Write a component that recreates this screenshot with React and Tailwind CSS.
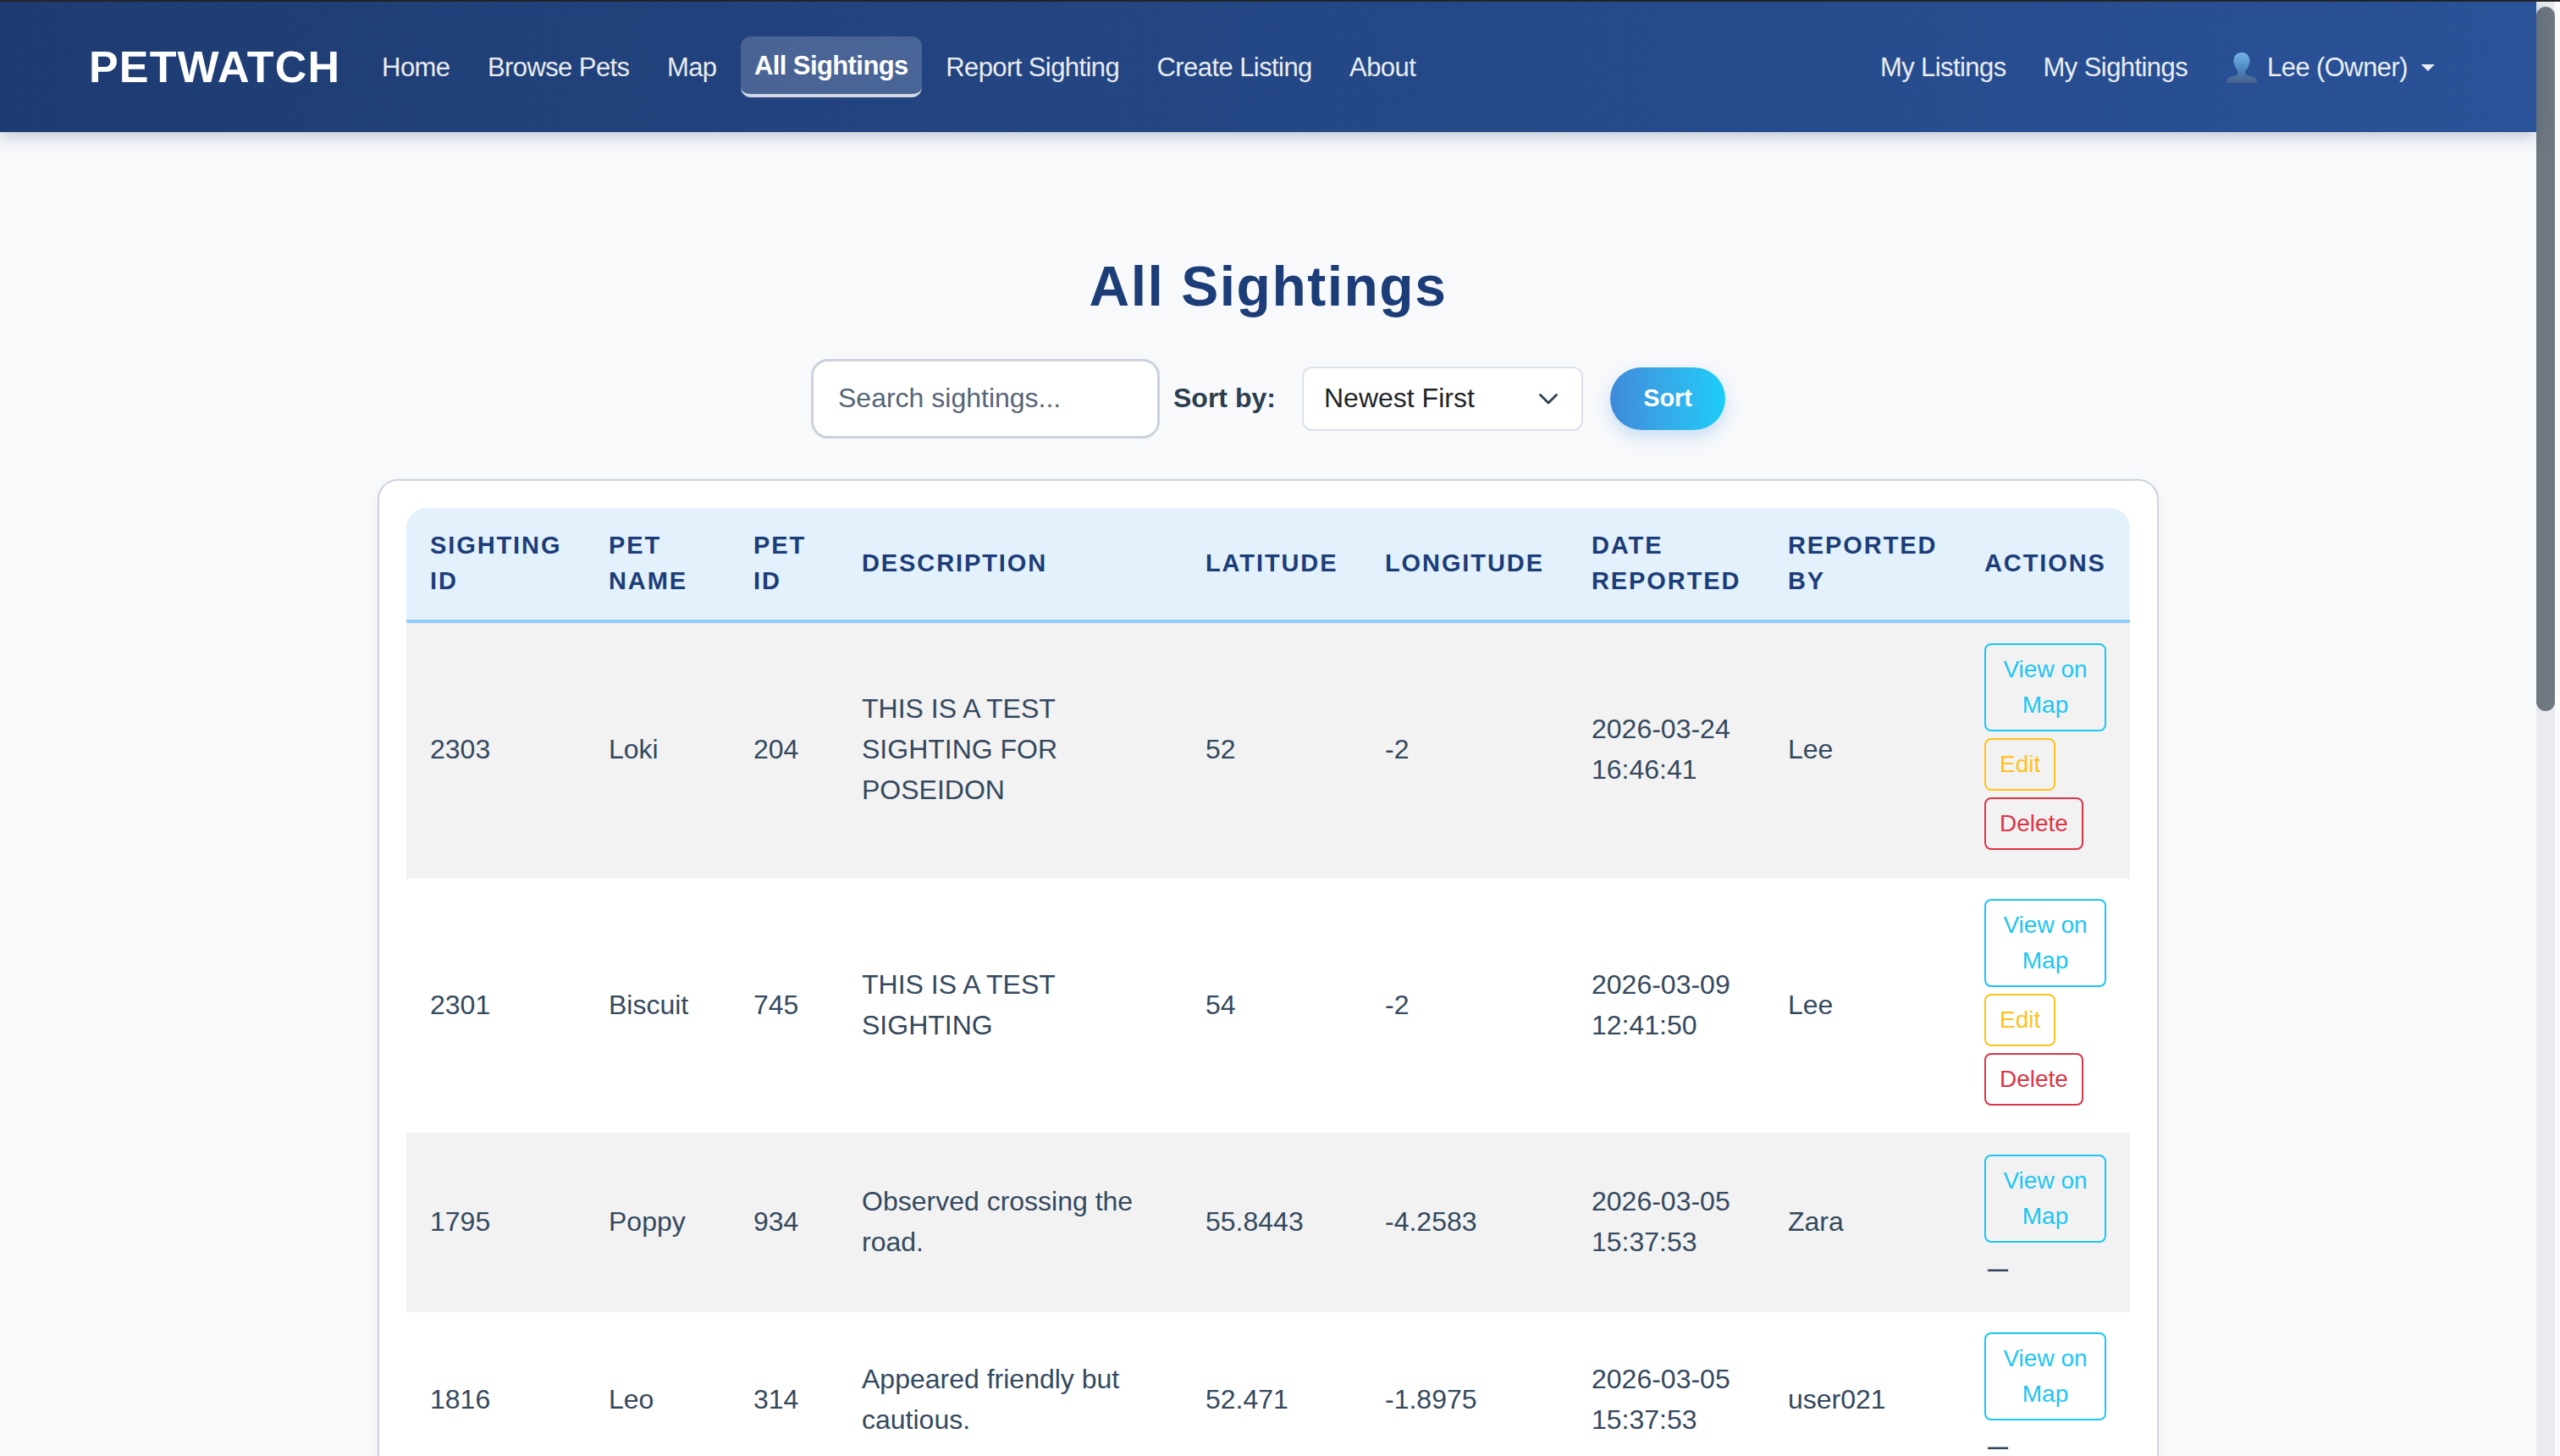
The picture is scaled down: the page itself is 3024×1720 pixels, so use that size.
import React from 'react';
import clsx from 'clsx';

const NAV_LINKS = ['Home', 'Browse Pets', 'Map', 'All Sightings', 'Report Sighting', 'Create Listing', 'About'];

const COLUMNS = [
    { label: 'Sighting ID', width: 'w-[211px]' },
    { label: 'Pet Name', width: 'w-[171px]' },
    { label: 'Pet ID', width: 'w-[128px]' },
    { label: 'Description', width: 'w-[406px]' },
    { label: 'Latitude', width: 'w-[212px]' },
    { label: 'Longitude', width: 'w-[244px]' },
    { label: 'Date Reported', width: 'w-[232px]' },
    { label: 'Reported By', width: 'w-[232px]' },
    { label: 'Actions', width: 'w-[200px]' },
];

const SIGHTINGS = [
    { id: 2303, name: 'Loki', petId: 204, description: 'THIS IS A TEST SIGHTING FOR POSEIDON', lat: '52', lng: '-2', date: '2026-03-24 16:46:41', by: 'Lee', own: true },
    { id: 2301, name: 'Biscuit', petId: 745, description: 'THIS IS A TEST SIGHTING', lat: '54', lng: '-2', date: '2026-03-09 12:41:50', by: 'Lee', own: true },
    { id: 1795, name: 'Poppy', petId: 934, description: 'Observed crossing the road.', lat: '55.8443', lng: '-4.2583', date: '2026-03-05 15:37:53', by: 'Zara', own: false },
    { id: 1816, name: 'Leo', petId: 314, description: 'Appeared friendly but cautious.', lat: '52.471', lng: '-1.8975', date: '2026-03-05 15:37:53', by: 'user021', own: false },
];

const UserIcon = () => (
    <svg viewBox="0 0 36 38" className="ml-0.5 h-[38px] w-9">
        <defs>
            <linearGradient id="bust" x1="0" y1="0" x2="0" y2="1">
                <stop offset="0" stopColor="#74b2e6" />
                <stop offset="0.5" stopColor="#4f8cc4" />
                <stop offset="1" stopColor="#485f88" />
            </linearGradient>
        </defs>
        <path
            d="M18 1c5.800 0 9.200 3.600 9.200 8.800 1 .3 1 3.200-.4 4-.5 4-2 6.700-4.300 8.700v3.500c0 1.600 2.500 2.200 6 2.900 5 1 7.500 3.100 7.500 8.100H0c0-5 2.500-7.100 7.500-8.100 3.500-.7 6-1.300 6-2.900v-3.500c-2.300-2-3.800-4.700-4.300-8.700-1.400-.8-1.400-3.700-.4-4C8.800 4.600 12.200 1 18 1z"
            fill="url(#bust)"
        />
    </svg>
);

const NavLink = ({ children, active }) => (
    <a
        className={clsx(
            'flex h-[72px] items-center rounded-xl px-4 whitespace-nowrap',
            active
                ? 'border-b-4 border-white/75 bg-white/18 pt-0.5 font-bold text-white'
                : 'pt-0.5 text-white/90'
        )}
    >
        {children}
    </a>
);

const Navbar = () => (
    <nav className="relative flex h-[154px] items-center justify-between bg-linear-to-r from-[#1e3c72] to-[#2a5298] px-[104px] text-[31px] tracking-[-0.580px] shadow-[0_4px_20px_rgba(30,60,114,0.3)]">
        <div className="flex items-center">
            <span className="mr-[33px] ml-px text-[52px] leading-none font-bold tracking-[1.150px] text-white">PETWATCH</span>
            <div className="flex items-center gap-[12.4px]">
                {NAV_LINKS.map(link => (
                    <NavLink key={link} active={link === 'All Sightings'}>{link}</NavLink>
                ))}
            </div>
        </div>
        <div className="flex items-center gap-3">
            <NavLink>My Listings</NavLink>
            <NavLink>My Sightings</NavLink>
            <NavLink>
                <UserIcon />
                <span className="ml-3">Lee (Owner)</span>
                <span className="ml-4 border-x-8 border-t-8 border-x-transparent border-t-white/90" />
            </NavLink>
        </div>
    </nav>
);

const Toolbar = () => (
    <div className="flex items-center justify-center text-[32px]">
        <div className="flex h-[94px] w-[412px] items-center rounded-[20px] border-3 border-[#cbd2de] bg-white px-[29px] pb-0.5 text-[#566578]">
            Search sightings...
        </div>
        <span className="ml-4 w-[121px] pb-0.5 font-bold whitespace-nowrap text-[#2c3e50]">Sort by:</span>
        <div className="ml-[31px] flex h-[76px] w-[332px] items-center justify-between rounded-xl border-2 border-[#dce1e9] bg-white pr-7 pb-0.5 pl-6 text-[#212529]">
            Newest First
            <svg viewBox="0 0 22 13" className="mt-0.5 h-[13px] w-[22px]" fill="none" stroke="#2c3e50" strokeWidth="2.800" strokeLinecap="round" strokeLinejoin="round">
                <path d="M1.500 1.500l9.500 9.500 9.500-9.500" />
            </svg>
        </div>
        <button className="ml-8 flex h-[74px] w-[136px] items-center justify-center rounded-full bg-linear-to-r from-[#3f8ada] to-[#18cdf8] text-[28.8px] font-bold text-white shadow-[0_8px_20px_rgba(52,140,219,0.25)]">
            Sort
        </button>
    </div>
);

const ActionButton = ({ children, className }) => (
    <button className={clsx('rounded-lg border-2 px-4 py-2 text-[28px] leading-[42px]', className)}>{children}</button>
);

const SightingRow = ({ sighting, striped }) => (
    <tr
        className={clsx(
            'text-[32px] leading-[48px] text-[#34495e]',
            striped ? 'bg-[#f2f2f2]' : 'bg-white',
            sighting.own ? 'h-[302px]' : 'h-[210px]'
        )}
    >
        <td className="px-7 pb-0.5">{sighting.id}</td>
        <td className="px-7 pb-0.5">{sighting.name}</td>
        <td className="px-7 pb-0.5">{sighting.petId}</td>
        <td className="px-7 pb-0.5">{sighting.description}</td>
        <td className="px-7 pb-0.5">{sighting.lat}</td>
        <td className="px-7 pb-0.5">{sighting.lng}</td>
        <td className="px-7 pb-0.5">{sighting.date}</td>
        <td className="px-7 pb-0.5">{sighting.by}</td>
        <td className="px-7 pt-6 align-top">
            <div className="flex flex-col items-start gap-2">
                <ActionButton className="border-[#1bc6f3] text-[#1bc6f3]">View on Map</ActionButton>
                {sighting.own ? (
                    <>
                        <ActionButton className="h-[62px] border-[#ffc21c] text-[#ffc21c]">Edit</ActionButton>
                        <ActionButton className="h-[62px] border-[#dc3545] text-[#dc3545]">Delete</ActionButton>
                    </>
                ) : (
                    <span className="ml-1 text-[24px] leading-[46px] font-bold">—</span>
                )}
            </div>
        </td>
    </tr>
);

const SightingsTable = () => (
    <div className="mx-auto w-[2104px] rounded-3xl border-2 border-[#cdd2de] bg-white p-8 shadow-[0_4px_16px_rgba(0,0,0,0.04)]">
        <div className="overflow-hidden rounded-t-3xl">
            <table className="w-full table-fixed border-separate border-spacing-0 text-left [&_td]:border-b-2 [&_td]:border-[#f2f2f2]">
                <thead>
                    <tr className="h-[136px] bg-[#e3f1fd] text-[29px] leading-[42px] text-[#1c3d78]">
                        {COLUMNS.map(col => (
                            <th
                                key={col.label}
                                className={clsx('border-b-4 border-[#90cdf9] pr-0 pb-0.5 pl-7 font-bold tracking-[1.900px] uppercase', col.width)}
                            >
                                {/* two-word labels break after the first word */}
                                <span className="block w-min">{col.label}</span>
                            </th>
                        ))}
                    </tr>
                </thead>
                <tbody>
                    {SIGHTINGS.map((s, i) => (
                        <SightingRow key={s.id} sighting={s} striped={i % 2 === 0} />
                    ))}
                </tbody>
            </table>
        </div>
    </div>
);

const Scrollbar = () => (
    <div className="w-7 shrink-0 bg-[#fafbfc]">
        <div className="h-full w-[22px] bg-[#eaebef] pt-1.5">
            <div className="h-[832px] rounded-full bg-[#6f7780]" />
        </div>
    </div>
);

export default function App() {
    return (
        <div className="flex h-[1720px] w-[3024px] overflow-hidden border-t-2 border-[#222326] bg-[#f8f9fb] font-['Liberation_Sans',Arial,sans-serif]">
            <div className="w-[2996px]">
                <Navbar />
                <main>
                    <h1 className="mt-36 mb-[47px] text-center text-[66px] leading-[77px] font-bold tracking-[1.500px] text-[#1c3d78]">
                        All Sightings
                    </h1>
                    <Toolbar />
                    <div className="h-12" />
                    <SightingsTable />
                </main>
            </div>
            <Scrollbar />
        </div>
    );
}
